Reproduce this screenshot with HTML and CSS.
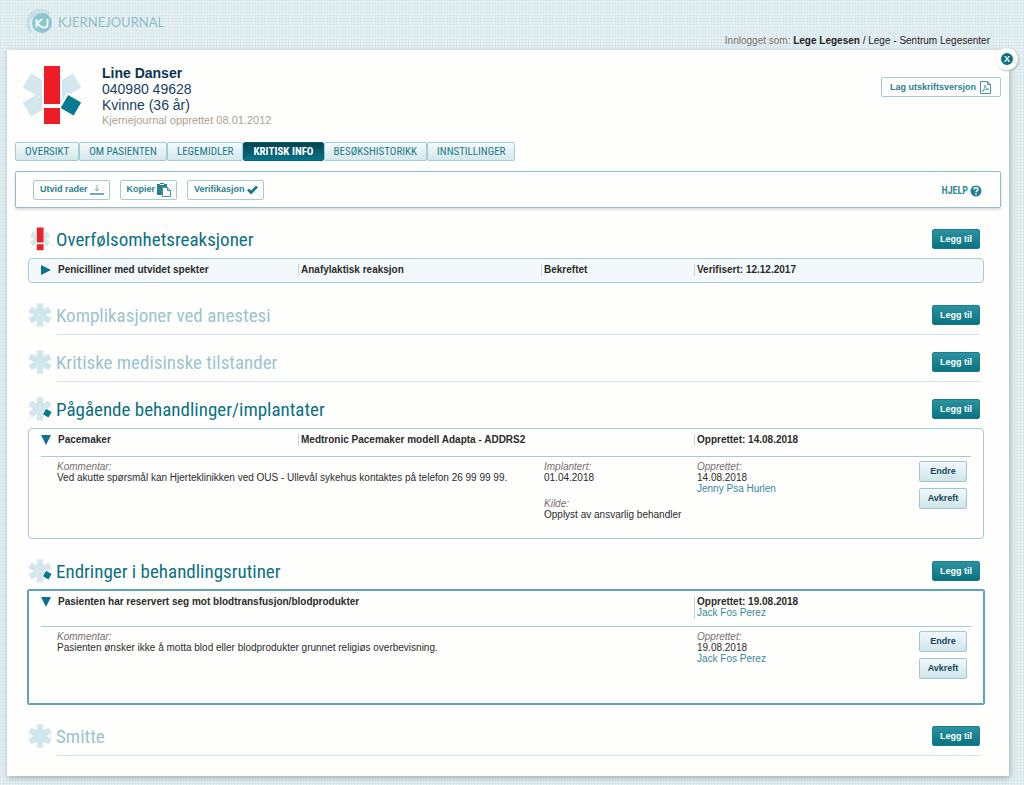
FILE: index.html
```html
<!DOCTYPE html>
<html lang="no">
<head>
<meta charset="utf-8">
<title>Kjernejournal</title>
<link rel="stylesheet" href="styles.css">
</head>
<body>
<svg class="defs" aria-hidden="true">
  <symbol id="star" viewBox="0 0 60 60">
    <rect x="22" y="1" width="16" height="58"/>
    <rect x="22" y="1" width="16" height="58" transform="rotate(60 30 30)"/>
    <rect x="22" y="1" width="16" height="58" transform="rotate(120 30 30)"/>
  </symbol>
</svg>
<header class="top">
  <div class="brand">
    <svg width="30" height="30" viewBox="0 0 30 30" aria-hidden="true">
      <path d="M5 26A14 14 0 0 1 26 6L22 10A10 10 0 0 0 8 25Z" fill="#c9e1e4"/>
      <circle cx="17" cy="16" r="10" fill="#8fc5cd"/>
      <path d="M11.500 12v8.500M17 12l-5 4.500 5.500 4M22.500 12v5.500c0 3.500-4 3.500-5 2.500" fill="none" stroke="#f4fbfb" stroke-width="1.800"/>
    </svg>
    <span>KJERNEJOURNAL</span>
  </div>
  <p class="login">Innlogget som: <b>Lege Legesen</b> <span>/ Lege - Sentrum Legesenter</span></p>
</header>
<main class="panel">
  <button class="close" aria-label="Lukk">X</button>
  <div class="patient">
    <svg class="patient-icon" viewBox="0 0 60 60" aria-hidden="true">
      <use href="#star" fill="#d4e7ec"/>
      <rect x="20" y="0" width="20" height="60" fill="#fff"/>
      <rect x="22" y="42" width="18" height="18" transform="rotate(-60 30 30)" fill="#fff"/>
      <rect x="23" y="44" width="15" height="15" transform="rotate(-60 30 30)" fill="#087a8f"/>
      <rect x="22" y="1" width="16" height="38" fill="#ee1c25"/>
      <rect x="22" y="43" width="16" height="16" fill="#ee1c25"/>
    </svg>
    <div class="patient-text">
      <h1>Line Danser</h1>
      <p>040980 49628</p>
      <p>Kvinne (36 år)</p>
      <p class="created">Kjernejournal opprettet 08.01.2012</p>
    </div>
    <button class="outline print">Lag utskriftsversjon
      <svg width="11" height="13" viewBox="0 0 11 13" fill="none" stroke="#4a919f" aria-hidden="true"><path d="M.5.5h7l3 3v9H.5zM7.500 .5v3h3"/><path d="M2 10.500C4 9 5.500 6 5 4C4.500 6 7 8.500 9 8.500C7 7.500 4 9 2 10.500" stroke-width=".8"/></svg>
    </button>
  </div>
  <nav class="tabs">
    <a href="#">OVERSIKT</a><a href="#">OM PASIENTEN</a><a href="#">LEGEMIDLER</a><a href="#" class="active">KRITISK INFO</a><a href="#">BESØKSHISTORIKK</a><a href="#">INNSTILLINGER</a>
  </nav>
  <div class="toolbar">
    <button class="outline">Utvid rader
      <svg width="14" height="12" viewBox="0 0 14 12" fill="none" aria-hidden="true"><path d="M7 1v6M5 5l2 2 2-2" stroke="#8aa5ab"/><path d="M0 10h14" stroke="#6fa9b5" stroke-width="2"/></svg>
    </button>
    <button class="outline">Kopier
      <svg width="14" height="14" viewBox="0 0 14 14" aria-hidden="true"><path d="M0 1h3V0h4v1h3v3H5v8H0z" fill="#2a8291"/><path d="M3 1.500h4" stroke="#fff"/><path d="M5.500 4.500h5l3 3v6h-8zM10.500 4.500v3h3" fill="#fff" stroke="#4a919f"/></svg>
    </button>
    <button class="outline">Verifikasjon
      <svg width="11" height="10" viewBox="0 0 11 10" fill="none" aria-hidden="true"><path d="M1 4.500l3 3L10 1.500" stroke="#187989" stroke-width="2.800"/></svg>
    </button>
    <a class="help" href="#">HJELP
      <svg width="12" height="12" viewBox="0 0 12 12" aria-hidden="true"><circle cx="6" cy="6" r="5.500" fill="#23808f"/><path d="M4 4.500C4 2.300 8 2.300 8 4.500C8 6 6 5.800 6 7.300M6 8.200v1.500" fill="none" stroke="#fff" stroke-width="1.500"/></svg>
    </a>
  </div>

  <section>
    <div class="head">
      <svg class="mark" viewBox="0 0 60 60" aria-hidden="true"><use href="#star" x="4" y="4" width="52" height="52" fill="#d4e7ec"/><path d="M20 0h20v60H20z" fill="#fff"/><path d="M22 1h17v38H22zM22 43h17v15H22z" fill="#e8232b"/></svg>
      <h2>Overfølsomhetsreaksjoner</h2>
      <button class="add">Legg til</button>
    </div>
    <div class="card tinted">
      <div class="row">
        <button class="toggle" aria-label="Vis"><svg width="10" height="10" viewBox="0 0 10 10"><path d="M0 0l10 5-10 5z"/></svg></button>
        <div class="cell">Penicilliner med utvidet spekter</div>
        <div class="cell line">Anafylaktisk reaksjon</div>
        <div class="cell line">Bekreftet</div>
        <div class="cell line">Verifisert: 12.12.2017</div>
      </div>
    </div>
  </section>

  <section class="empty">
    <div class="head">
      <svg class="mark" aria-hidden="true"><use href="#star" fill="#cfe6ea"/></svg>
      <h2>Komplikasjoner ved anestesi</h2>
      <button class="add">Legg til</button>
    </div>
  </section>

  <section class="empty">
    <div class="head">
      <svg class="mark" aria-hidden="true"><use href="#star" fill="#cfe6ea"/></svg>
      <h2>Kritiske medisinske tilstander</h2>
      <button class="add">Legg til</button>
    </div>
  </section>

  <section>
    <div class="head">
      <svg class="mark" viewBox="0 0 60 60" aria-hidden="true"><use href="#star" fill="#d4e7ec"/><rect x="20" y="41" width="20" height="20" transform="rotate(-60 30 30)" fill="#fff"/><rect x="22" y="43" width="16" height="16" transform="rotate(-60 30 30)" fill="#087a8f"/></svg>
      <h2>Pågående behandlinger/implantater</h2>
      <button class="add">Legg til</button>
    </div>
    <div class="card">
      <div class="row">
        <button class="toggle" aria-label="Skjul"><svg width="10" height="10" viewBox="0 0 10 10"><path d="M0 0h10L5 10z"/></svg></button>
        <div class="cell">Pacemaker</div>
        <div class="cell line wide">Medtronic Pacemaker modell Adapta - ADDRS2</div>
        <div class="cell line">Opprettet: 14.08.2018</div>
      </div>
      <div class="details">
        <div class="comment"><i>Kommentar:</i><p>Ved akutte spørsmål kan Hjerteklinikken ved OUS - Ullevål sykehus kontaktes på telefon 26 99 99 99.</p></div>
        <div class="facts">
          <div><i>Implantert:</i><p>01.04.2018</p></div>
          <div><i>Kilde:</i><p>Opplyst av ansvarlig behandler</p></div>
        </div>
        <div class="author"><i>Opprettet:</i><p>14.08.2018</p><a href="#">Jenny Psa Hurlen</a></div>
        <div class="actions"><button>Endre</button><button>Avkreft</button></div>
      </div>
    </div>
  </section>

  <section>
    <div class="head">
      <svg class="mark" viewBox="0 0 60 60" aria-hidden="true"><use href="#star" fill="#d4e7ec"/><rect x="20" y="41" width="20" height="20" transform="rotate(-60 30 30)" fill="#fff"/><rect x="22" y="43" width="16" height="16" transform="rotate(-60 30 30)" fill="#087a8f"/></svg>
      <h2>Endringer i behandlingsrutiner</h2>
      <button class="add">Legg til</button>
    </div>
    <div class="card selected">
      <div class="row">
        <button class="toggle" aria-label="Skjul"><svg width="10" height="10" viewBox="0 0 10 10"><path d="M0 0h10L5 10z"/></svg></button>
        <div class="cell full">Pasienten har reservert seg mot blodtransfusjon/blodprodukter</div>
        <div class="cell line">Opprettet: 19.08.2018<br><a href="#">Jack Fos Perez</a></div>
      </div>
      <div class="details">
        <div class="comment"><i>Kommentar:</i><p>Pasienten ønsker ikke å motta blod eller blodprodukter grunnet religiøs overbevisning.</p></div>
        <div class="author"><i>Opprettet:</i><p>19.08.2018</p><a href="#">Jack Fos Perez</a></div>
        <div class="actions"><button>Endre</button><button>Avkreft</button></div>
      </div>
    </div>
  </section>

  <section class="empty">
    <div class="head">
      <svg class="mark" aria-hidden="true"><use href="#star" fill="#cfe6ea"/></svg>
      <h2>Smitte</h2>
      <button class="add">Legg til</button>
    </div>
  </section>
</main>
</body>
</html>
```

FILE: styles.css
```css
* { box-sizing: border-box; }
body {
  margin: 0;
  padding: 0 15px 10px 7px;
  font: 10px/11px "Liberation Sans", Arial, sans-serif;
  color: #2b2b2b;
  background-color: #e6f1f3;
  background-image:
    linear-gradient(#dbe9ec 1px, transparent 1px),
    linear-gradient(90deg, #dbe9ec 1px, transparent 1px);
  background-size: 3px 3px;
}
h1, h2, p { margin: 0; font-weight: normal; }
a { color: #35899a; text-decoration: none; }
button { font: bold 9px/11px "Liberation Sans", Arial, sans-serif; cursor: pointer; }
i { color: #776e6e; }
.defs { position: absolute; width: 0; height: 0; }

.top {
  display: flex;
  justify-content: space-between;
  align-items: flex-start;
  height: 50px;
  padding: 5px 19px 0 18px;
}
.brand {
  display: flex;
  align-items: center;
  gap: 3px;
  padding-top: 2px;
  color: #8fc1c9;
  font: 13px/30px Lato, sans-serif;
}
.login { padding-top: 30px; color: #77736e; }
.login b, .login span { color: #222; }

.panel {
  position: relative;
  padding: 0 8px 20px;
  background: #fefefd;
  box-shadow: 1px 2px 6px #9fb2b2;
}
.close {
  position: absolute;
  top: -2px;
  right: -9px;
  width: 22px;
  height: 22px;
  padding: 0;
  border: 5px solid #fefefd;
  border-radius: 50%;
  background: #08707f;
  color: #fff;
  box-shadow: 1px 1px 2px #a9bcbc;
}

.patient { display: flex; align-items: flex-start; height: 92px; padding: 15px 0 0 7px; }
.patient-icon { width: 60px; height: 60px; margin-right: 20px; }
.patient-text { flex: 1; color: #17405f; font-size: 14px; line-height: 16px; }
.patient-text h1 { color: #0b3355; font-size: 14px; font-weight: bold; }
.patient-text .created { color: #aaa296; font-size: 11px; line-height: 14px; }
.outline {
  display: flex;
  align-items: center;
  gap: 2px;
  height: 20px;
  padding: 0 5px 0 6px;
  border: 1px solid #a5cad3;
  border-radius: 2px;
  background: #fefefd;
  color: #2b8090;
  white-space: nowrap;
}
.print { margin-top: 12px; padding: 0 9px 0 8px; gap: 4px; }

.tabs { display: flex; font: 11px/17px "Roboto Condensed", Roboto, sans-serif; }
.tabs a {
  padding: 0 9px;
  border: 1px solid #a3cdd3;
  border-radius: 2px;
  background: linear-gradient(#f4fafb, #d3e8eb);
  color: #237888;
}
.tabs .active { border-color: #05616f; background: linear-gradient(#03424f, #08748a); color: #fff; font-weight: bold; }

.toolbar {
  display: flex;
  align-items: center;
  gap: 10px;
  height: 37px;
  margin: 10px 0 12px;
  padding: 0 18px 0 17px;
  border: 1px solid #8fbfca;
  border-radius: 2px;
  box-shadow: 0 2px 3px #dbe0e0;
}
.help {
  display: flex;
  align-items: center;
  gap: 2px;
  margin-left: auto;
  padding-top: 2px;
  font: bold 10px/14px "Roboto Condensed", Roboto, sans-serif;
}

section { padding: 0 17px 13px 13px; }
.head { display: flex; align-items: center; gap: 4px; height: 38px; padding-right: 4px; }
.mark { width: 24px; height: 24px; }
h2 { flex: 1; padding-top: 2px; color: #0c7083; font: 19px/24px "Roboto Condensed", Roboto, sans-serif; }
.add {
  width: 48px;
  height: 20px;
  padding: 0;
  border: 1px solid #187c8a;
  border-radius: 2px;
  background: linear-gradient(#2c92a0, #087382);
  color: #fff;
}
.empty { padding-bottom: 8px; }
.empty::after { content: ""; display: block; height: 1px; margin: 0 4px 0 29px; background: #d3e5ea; }
.empty h2 { color: #9bc4ce; }
.empty:last-child { padding-bottom: 0; }

.card { padding: 0 12px; border: 1px solid #a3cdd6; border-radius: 4px; }
.tinted { background: #f3f8fa; }
.selected { border-color: #62a3b2; border-radius: 1px; outline: 1px solid #62a3b2; }
.row, .details {
  display: grid;
  grid-template-columns: 16px 241fr 243fr 153fr 277fr;
}
.row { padding: 5px 0 6px; font-weight: bold; }
.row a { font-weight: normal; }
.toggle { padding: 0; border: 0; background: none; text-align: left; height: 12px; line-height: 0; }
.toggle svg { fill: #08748a; }
.cell { padding: 0 0 1px 1px; }
.line { padding-left: 2px; border-left: 1px solid #c3d6dc; }
.wide { grid-column: span 2; }
.full { grid-column: span 3; }
.details { min-height: 82px; padding-top: 4px; border-top: 1px solid #a3cdd6; }
.card:not(.tinted) .row { padding-bottom: 10px; }
.card.selected .row { padding-bottom: 7px; }
.selected .details { min-height: 77px; }
.comment { grid-column: 2 / 4; }
.facts { grid-column: 4; display: grid; gap: 15px; align-content: start; padding-left: 3px; white-space: nowrap; }
.author { grid-column: 5; grid-row: 1; padding-left: 3px; }
.author a { display: block; }
.actions { grid-column: 5; grid-row: 1; justify-self: end; display: grid; gap: 6px; align-content: start; padding-right: 4px; }
.actions button {
  width: 48px;
  height: 21px;
  padding: 0;
  border: 1px solid #a0c6d1;
  border-radius: 2px;
  background: linear-gradient(#f1f8fa, #cfe5ea);
  color: #16465c;
}
```
